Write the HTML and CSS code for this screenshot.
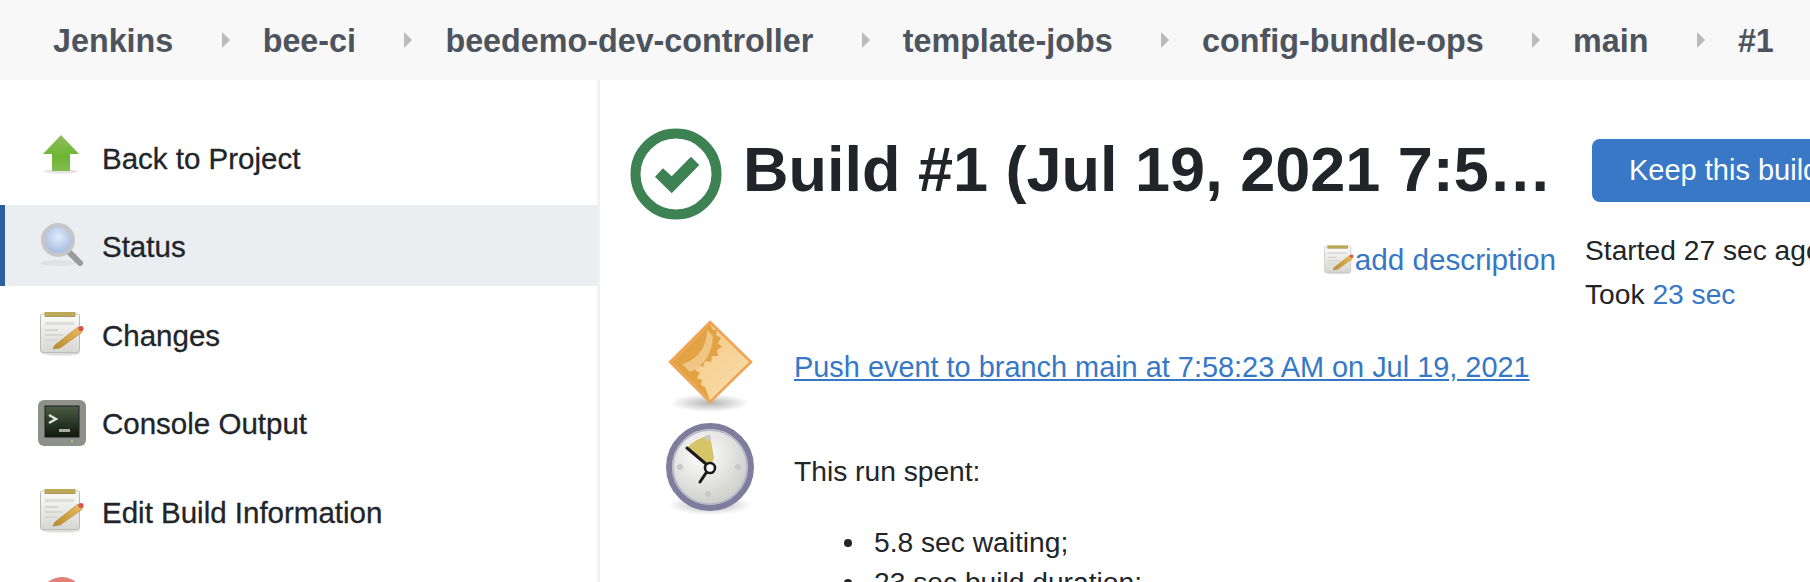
FILE: index.html
```html
<!DOCTYPE html>
<html>
  <head>
    <title>config-bundle-ops #1 [Jenkins]</title>
    <meta name="viewport" content="width=device-width, initial-scale=1" />
    <link rel="stylesheet" href="styles.css">
  </head>
  <body>
    <svg class="defs" width="0" height="0">
      <defs>
        <linearGradient id="paper" x1="0" y1="0" x2="0" y2="1">
          <stop offset="0" stop-color="#fbfbfa" />
          <stop offset="1" stop-color="#d6d6d2" />
        </linearGradient>
        <linearGradient id="pencil" x1="0" y1="1" x2="1" y2="0">
          <stop offset="0" stop-color="#b98a2c" />
          <stop offset="1" stop-color="#eebd5c" />
        </linearGradient>
        <symbol id="notepad" viewBox="0 0 48 48">
          <ellipse cx="23" cy="43.5" rx="19" ry="2" fill="#ddd" />
          <rect x="2.5" y="4" width="39" height="38.5" rx="2" fill="url(#paper)" stroke="#bcbcb6" />
          <rect x="6.5" y="2" width="31" height="4" fill="#bda955" />
          <rect x="6.5" y="6" width="31" height="1" fill="#a89a60" />
          <rect x="7" y="12" width="29" height="3" fill="#dcdcda" />
          <rect x="7" y="19" width="13" height="2" fill="#d6d6d4" />
          <rect x="7" y="24" width="18" height="2" fill="#d6d6d4" />
          <rect x="7" y="29" width="12" height="2" fill="#d6d6d4" />
          <polygon points="17,35 40,17 44.5,22 22,38 15,39" fill="url(#pencil)" stroke="#a07c34" stroke-width=".5" />
          <circle cx="43" cy="18.5" r="2.6" fill="#d9534a" />
        </symbol>
      </defs>
    </svg>

    <nav class="crumbs">
      <a class="crumb" href="#">Jenkins</a><span class="crumb-sep"></span>
      <a class="crumb" href="#">bee-ci</a><span class="crumb-sep"></span>
      <a class="crumb" href="#">beedemo-dev-controller</a><span class="crumb-sep"></span>
      <a class="crumb" href="#">template-jobs</a><span class="crumb-sep"></span>
      <a class="crumb" href="#">config-bundle-ops</a><span class="crumb-sep"></span>
      <a class="crumb" href="#">main</a><span class="crumb-sep"></span>
      <a class="crumb" href="#">#1</a>
    </nav>

    <div class="page">
      <aside class="side">
        <a class="task" href="#">
          <svg class="task-icon" viewBox="0 0 48 48">
            <defs>
              <linearGradient id="arrow" x1="0" y1="0" x2="0" y2="1">
                <stop offset="0" stop-color="#8fbe5e" />
                <stop offset=".6" stop-color="#6cb632" />
                <stop offset="1" stop-color="#85bd55" />
              </linearGradient>
            </defs>
            <ellipse cx="23" cy="38.5" rx="17" ry="2" fill="#e4e4e4" />
            <polygon points="23,2 41,21 32,21 32,38 14,38 14,21 5,21" fill="url(#arrow)" />
          </svg>
          <span class="task-label">Back to Project</span>
        </a>
        <a class="task active" href="#">
          <svg class="task-icon" viewBox="0 0 48 48">
            <defs>
              <radialGradient id="lens" cx=".5" cy=".4" r=".6">
                <stop offset="0" stop-color="#e2ebf8" />
                <stop offset="1" stop-color="#9db8e0" />
              </radialGradient>
            </defs>
            <ellipse cx="20" cy="42" rx="18" ry="3" fill="#dfe2e5" />
            <line x1="29" y1="29" x2="42" y2="42" stroke="#9a9a9a" stroke-width="6" stroke-linecap="round" />
            <circle cx="20" cy="19" r="15" fill="url(#lens)" stroke="#c4c6c8" stroke-width="4" />
          </svg>
          <span class="task-label">Status</span>
        </a>
        <a class="task" href="#">
          <svg class="task-icon"><use href="#notepad" /></svg>
          <span class="task-label">Changes</span>
        </a>
        <a class="task" href="#">
          <svg class="task-icon" viewBox="0 0 48 48">
            <defs>
              <linearGradient id="screen" x1="0" y1="0" x2="0" y2="1">
                <stop offset="0" stop-color="#4a5d44" />
                <stop offset="1" stop-color="#10180e" />
              </linearGradient>
            </defs>
            <rect x="0" y="2" width="48" height="46" rx="6" fill="#8e918a" />
            <rect x="7" y="8" width="34" height="31" fill="url(#screen)" stroke="#1d1f1c" />
            <path d="M11 17 L18 21 L11 25" fill="none" stroke="#dfe8d8" stroke-width="2.4" />
            <rect x="21" y="31" width="11" height="3" fill="#a5ac9e" />
            <circle cx="34" cy="43" r="1" fill="#a6e05a" />
          </svg>
          <span class="task-label">Console Output</span>
        </a>
        <a class="task" href="#">
          <svg class="task-icon"><use href="#notepad" /></svg>
          <span class="task-label">Edit Build Information</span>
        </a>
        <a class="task" href="#">
          <svg class="task-icon" viewBox="0 0 48 48">
            <circle cx="24" cy="24" r="22" fill="#e0807a" />
          </svg>
        </a>
      </aside>

      <main class="main">
        <div class="left">
          <div class="title-row">
            <svg class="ball" viewBox="0 0 92 92">
              <circle cx="46" cy="46" r="40.5" fill="none" stroke="#3d8252" stroke-width="10" />
              <polygon points="33,40.3 25,48.7 41.7,65.3 69.3,37 61,28.7 41.7,48.3" fill="#3d8252" />
            </svg>
            <h1 class="title">Build #1 (Jul 19, 2021 7:5…</h1>
          </div>

          <div class="desc">
            <svg class="desc-icon"><use href="#notepad" /></svg><a href="#">add description</a>
          </div>

          <div class="summary push">
            <svg class="sum-icon" viewBox="0 0 96 100">
              <defs>
                <radialGradient id="shade" cx=".5" cy=".5" r=".5">
                  <stop offset="0" stop-color="#b4b4b4" />
                  <stop offset="1" stop-color="#fff" />
                </radialGradient>
                <linearGradient id="tile" x1="0" y1="0" x2="1" y2="1">
                  <stop offset="0" stop-color="#f0c37c" />
                  <stop offset="1" stop-color="#fbe0ae" />
                </linearGradient>
              </defs>
              <ellipse cx="44" cy="85" rx="40" ry="9" fill="url(#shade)" />
              <polygon points="44,4 85,44 44,84 4,44" fill="url(#tile)" stroke="#f0a354" stroke-width="2.5" />
              <path d="M44 6 L47 12 L51 12 L50 17 L55 20 L52 25 L56 29 L51 32 L52 38 L46 38 L45 44 L39 43 L37 49 L33 47 L29 52 L34 55 L31 60 L36 62 L35 67 L39 69 L44 82 L6 44 Z" fill="#e3a244" />
              <path d="M41 12 C41 28 32 42 16 46 L24 54 C38 48 46 36 47 18 Z" fill="#f0c684" />
            </svg>
            <a class="sum-link" href="#">Push event to branch main at 7:58:23 AM on Jul 19, 2021</a>
          </div>

          <div class="summary">
            <svg class="sum-icon" viewBox="0 0 96 100">
              <defs>
                <radialGradient id="face" cx=".4" cy=".35" r=".75">
                  <stop offset="0" stop-color="#ffffff" />
                  <stop offset="1" stop-color="#c4c4c0" />
                </radialGradient>
              </defs>
              <ellipse cx="44" cy="87" rx="42" ry="10" fill="url(#shade)" />
              <circle cx="44" cy="49" r="41" fill="url(#face)" stroke="#7f7c9e" stroke-width="6" />
              <circle cx="44" cy="49" r="37" fill="none" stroke="#b5b3c8" stroke-width="1.5" />
              <path d="M44 50 L21 30 Q28 21 44 17 L48 40 Z" fill="#d6c566" />
              <circle cx="42" cy="20" r="3" fill="#c8c8c8" />
              <circle cx="42" cy="76" r="3" fill="#c8c8c8" />
              <circle cx="14" cy="49" r="3" fill="#c8c8c8" />
              <circle cx="72" cy="49" r="3" fill="#c8c8c8" />
              <path d="M40 46 L21 30 M40 55 L34 64" stroke="#1a1a1a" stroke-width="3" stroke-linecap="round" />
              <circle cx="44" cy="50" r="5" fill="#fff" stroke="#1a1a1a" stroke-width="2.6" />
            </svg>
            <div class="sum-text">
              <p class="spent">This run spent:</p>
              <ul class="spent-list">
                <li>5.8 sec waiting;</li>
                <li>23 sec build duration;</li>
              </ul>
            </div>
          </div>
        </div>

        <div class="right">
          <button class="keep" type="button">Keep this build forever</button>
          <div class="times">
            <p>Started 27 sec ago</p>
            <p>Took <a href="#">23 sec</a></p>
          </div>
        </div>
      </main>
    </div>
  </body>
</html>
```

FILE: styles.css
```css
html, body {
  height: 100%;
  margin: 0;
  overflow: hidden;
}

body {
  font-family: "Liberation Sans", Arial, sans-serif;
  font-size: 28.2px;
  color: #212529;
  background-color: #fff;
}

a {
  color: #3578c6;
  text-decoration: none;
}

p {
  margin: 0;
}

.defs {
  display: block;
  height: 0;
}

.crumbs {
  display: flex;
  align-items: center;
  box-sizing: border-box;
  height: 80px;
  padding: 2px 0 0 53px;
  background-color: #f8f8f8;
  white-space: nowrap;
}

.crumb {
  font-size: 32.3px;
  font-weight: bold;
  color: #4d545d;
}

.crumb-sep {
  width: 0;
  height: 0;
  margin: -2px 33px 0 48.4px;
  border-left: 8px solid #bbb;
  border-top: 8px solid transparent;
  border-bottom: 8px solid transparent;
}

.page {
  display: flex;
  height: 502px;
  overflow: hidden;
}

.side {
  flex: none;
  width: 597px;
  padding-top: 36px;
  border-right: 3px solid #f1f1f1;
}

.task {
  display: flex;
  align-items: center;
  gap: 16px;
  height: 81px;
  margin-bottom: 7.5px;
  padding-left: 33px;
  border-left: 5px solid transparent;
  color: #212529;
  font-size: 29.5px;
  -webkit-text-stroke: 0.3px #212529;
}

.task-label {
  margin-top: 4px;
}

.task.active {
  background-color: #eaeef1;
  border-left-color: #2b5fa0;
}

.task-icon {
  flex: none;
  width: 48px;
  height: 48px;
}

.main {
  display: flex;
  flex: 1;
  min-width: 0;
  padding: 48px 0 0 30px;
  overflow: hidden;
}

.left {
  flex: none;
  width: 955px;
}

.title-row {
  display: flex;
  align-items: center;
  gap: 21px;
  height: 92px;
}

.ball {
  flex: none;
  width: 92px;
  height: 92px;
}

.title {
  margin: -10px 0 0;
  font-size: 63px;
  line-height: 1;
  white-space: nowrap;
}

.desc {
  display: flex;
  justify-content: flex-end;
  align-items: center;
  height: 34px;
  margin-top: 23px;
  padding-right: 29px;
  font-size: 29.7px;
}

.desc-icon {
  width: 32px;
  height: 32px;
}

.summary {
  display: flex;
  gap: 32px;
  padding-left: 36px;
}

.push {
  margin-top: 41px;
}

.sum-icon {
  flex: none;
  width: 96px;
  height: 100px;
}

.sum-link {
  margin-top: 33px;
  font-size: 28.9px;
  text-decoration: underline;
}

.sum-text {
  padding-top: 37px;
}

.spent {
  line-height: 32px;
}

.spent-list {
  margin: 35px 0 0;
  padding-left: 80px;
  list-style: none;
  line-height: 40px;
}

.spent-list li::before {
  content: "";
  display: inline-block;
  width: 8px;
  height: 8px;
  margin: 0 22px 5px -30px;
  border-radius: 50%;
  background-color: #212529;
}

.right {
  flex: none;
  width: 300px;
}

.keep {
  display: block;
  height: 63px;
  margin: 11px 0 0 7px;
  padding: 0 37px;
  border: none;
  border-radius: 8px;
  background-color: #3878c7;
  color: #fff;
  font-family: inherit;
  font-size: 29px;
  white-space: nowrap;
}

.times {
  margin-top: 26px;
  line-height: 44px;
  white-space: nowrap;
}
```
